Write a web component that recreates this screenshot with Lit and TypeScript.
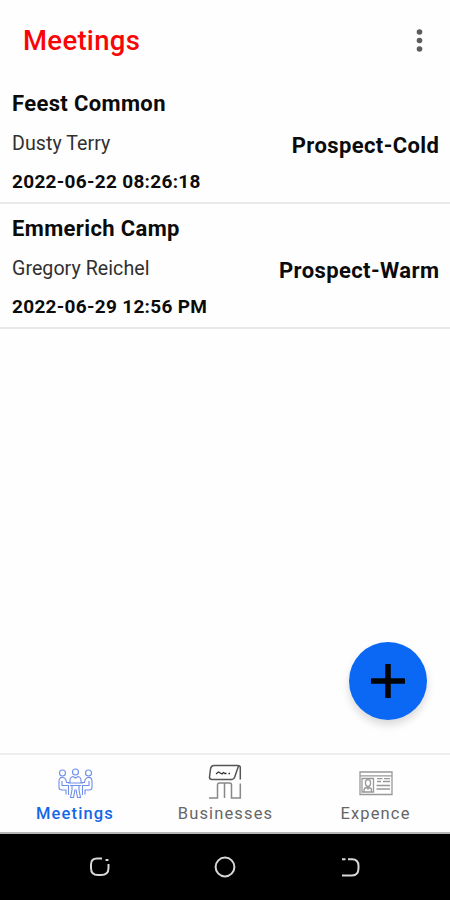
import { LitElement, html, css, svg } from "lit";
import { customElement } from "lit/decorators.js";

interface Meeting { name: string; person: string; date: string; status: string; }

const meetings: Meeting[] = [
  { name: "Feest Common", person: "Dusty Terry", date: "2022-06-22 08:26:18", status: "Prospect-Cold" },
  { name: "Emmerich Camp", person: "Gregory Reichel", date: "2022-06-29 12:56 PM", status: "Prospect-Warm" },
];

const seatedPerson = svg`
  <circle cx="4.5" cy="5" r="3"/>
  <path d="M5 9.500C2 9 1 11 1 13.500V19.500Q1 22 4 22H8V26.500M4 13V17.500H10.500V27M5 9.500Q8 10 8.500 14.500H12"/>`;

const meetingsIcon = html`<svg class="icon" width="35" height="31" viewBox="0 0 35 31">
  <g>${seatedPerson}</g>
  <g transform="matrix(-1 0 0 1 35 0)">${seatedPerson}</g>
  <circle cx="17.500" cy="4" r="3"/>
  <path d="M12 14.500Q11.500 9 15 8.500L17.500 10L20 8.500Q23.500 9 23 14.500M10 15H25M12 17.500H23M14 18V22L12.500 29.500H15.500L17 21.500M21 18V22L22.500 29.500H19.500L18 21.500"/>
</svg>`;

const businessesIcon = html`<svg class="icon" width="36" height="36" viewBox="0 0 36 36">
  <path class="strong" d="M6.500 1.500H30.500Q33.500 1.500 33.300 4V15.500M6.500 1.500Q4 2 3.500 5L2.500 13Q2.300 15 4.500 15.500H25Q27 15.300 27.700 13L31.500 2"/>
  <path class="face" d="M9 10L11.500 8L15 10L16.500 8.500L18 9.500H19.500M21.500 9.500H23"/>
  <path class="legs" d="M2 34H10.500V21Q10.500 19 12.500 19H22.500Q24.500 19 24.500 21V34H33.300V19.500M17.500 19V34"/>
</svg>`;

const expenceIcon = html`<svg class="icon" width="34" height="25" viewBox="0 0 34 25">
  <path d="M1 1H33V23.500H1ZM1 4.800H33M3 7.500H14.500V21H3ZM18 7.700H23.500M25 7.700H31M18 10.500H22M24 10.500H31M17.500 14.500H31M17.500 18H31"/>
  <path d="M6.500 13V11Q6.500 8.700 9 8.700T11.500 11V13Q11 15.500 9 15.500T6.500 13M5 21V18.500Q5.500 16.500 8 16.500L9 18L10 16.500Q12.500 17 12.500 19V21"/>
</svg>`;

const tabs = [
  { label: "Meetings", icon: meetingsIcon, cls: "tab active" },
  { label: "Businesses", icon: businessesIcon, cls: "tab" },
  { label: "Expence", icon: expenceIcon, cls: "tab" },
];

@customElement("app-root")
export class AppRoot extends LitElement {
  static styles = css`
    :host { display: flex; flex-direction: column; position: relative; width: 450px; height: 900px; overflow: hidden; background: #fefefe; color: #0b0b0b; font-family: Roboto, sans-serif; box-sizing: border-box; }
    * { box-sizing: border-box; }
    header { height: 79.5px; flex: none; display: flex; align-items: center; justify-content: space-between; padding: 2px 24px 0 23px; }
    h1 { margin: 0; font-size: 27.5px; font-weight: 500; letter-spacing: .3px; color: #fa0505; }
    .more { display: block; fill: #5c5c5c; }
    main { flex: 1; }
    .row { height: 124.5px; display: flex; justify-content: space-between; align-items: flex-start; padding: 4.5px 11px 0 12px; border-bottom: 2.5px solid #e9e9e9; white-space: nowrap; }
    .name { font-size: 22px; font-weight: 700; line-height: 40px; letter-spacing: .36px; }
    .person { font-size: 19.6px; line-height: 40px; color: #303030; letter-spacing: .05px; }
    .date { font-size: 19px; font-weight: 700; line-height: 36px; letter-spacing: .3px; }
    .status { font-size: 22px; font-weight: 700; line-height: 40px; margin-top: 42px; letter-spacing: .4px; margin-right: -.4px; }
    .fab { position: absolute; left: 349px; top: 642px; width: 78px; height: 78px; border: 0; padding: 0; border-radius: 50%; background: #0a68f5; box-shadow: 0 5px 9px rgba(0,0,0,.15); display: grid; place-items: center; }
    nav { flex: none; height: 81px; display: grid; grid-template-columns: repeat(3, 1fr); border-top: 2px solid #eeeeee; border-bottom: 2px solid #b5b5b5; }
    .tab { display: flex; flex-direction: column; align-items: center; color: #666; }
    .tab.active { color: #1467e8; }
    .glyph { height: 48px; padding-top: 10px; display: flex; align-items: flex-start; justify-content: center; }
    .icon { display: block; fill: none; stroke: #999; stroke-width: 1.3; margin-top: -1px; }
    .tab:nth-child(3) .icon { margin: 6px 0 0 1px; }
    .tab.active .icon { stroke: #6e8fea; stroke-width: 1.1; margin: 3px 0 0 1px; }
    .strong { stroke: #555; stroke-width: 1.5; }
    .face { stroke: #333; stroke-width: 1.3; }
    .legs { stroke: #888; stroke-width: 1.5; }
    .label { font-size: 16.500px; line-height: 22px; letter-spacing: 1.15px; margin-right: -1px; font-weight: 400; }
    footer { flex: none; height: 66px; background: #000; display: grid; grid-template-columns: repeat(3, 125px); justify-content: center; }
    .active .label { font-weight: 500; margin-right: 0; }
    footer svg { display: block; margin: 22px auto 0; fill: none; stroke: #d8d8d8; stroke-width: 2; }
  `;

  render() {
    return html`
      <header>
        <h1>Meetings</h1>
        <svg class="more" width="13" height="26" viewBox="0 0 13 26"><circle cx="6.500" cy="4" r="2.800"/><circle cx="6.500" cy="12.500" r="2.800"/><circle cx="6.500" cy="21" r="2.800"/></svg>
      </header>
      <main>
        ${meetings.map((m) => html`<section class="row">
          <div>
            <div class="name">${m.name}</div>
            <div class="person">${m.person}</div>
            <div class="date">${m.date}</div>
          </div>
          <div class="status">${m.status}</div>
        </section>`)}
      </main>
      <button class="fab" aria-label="Add">
        <svg width="34" height="34" viewBox="0 0 34 34" fill="none" stroke="#050505" stroke-width="5.600"><path d="M17 0V34M0 17H34"/></svg>
      </button>
      <nav>${tabs.map((t) => html`<div class=${t.cls}><div class="glyph">${t.icon}</div><div class="label">${t.label}</div></div>`)}</nav>
      <footer>
        <svg width="22" height="22" viewBox="0 0 22 22"><path d="M13 2.500H8Q2 2.500 2 8.500V12Q2 19 9 19H12Q19.500 19 19.500 12V8"/><path d="M16.500 4H19.500"/></svg>
        <svg width="22" height="22" viewBox="0 0 22 22"><circle cx="11" cy="11" r="9.400"/></svg>
        <svg width="22" height="22" viewBox="0 0 22 22"><path d="M3 3.200H6.500M9 3.200H13Q19.500 3.200 19.500 10V12Q19.500 19.500 13 19.500H3"/></svg>
      </footer>`;
  }
}
